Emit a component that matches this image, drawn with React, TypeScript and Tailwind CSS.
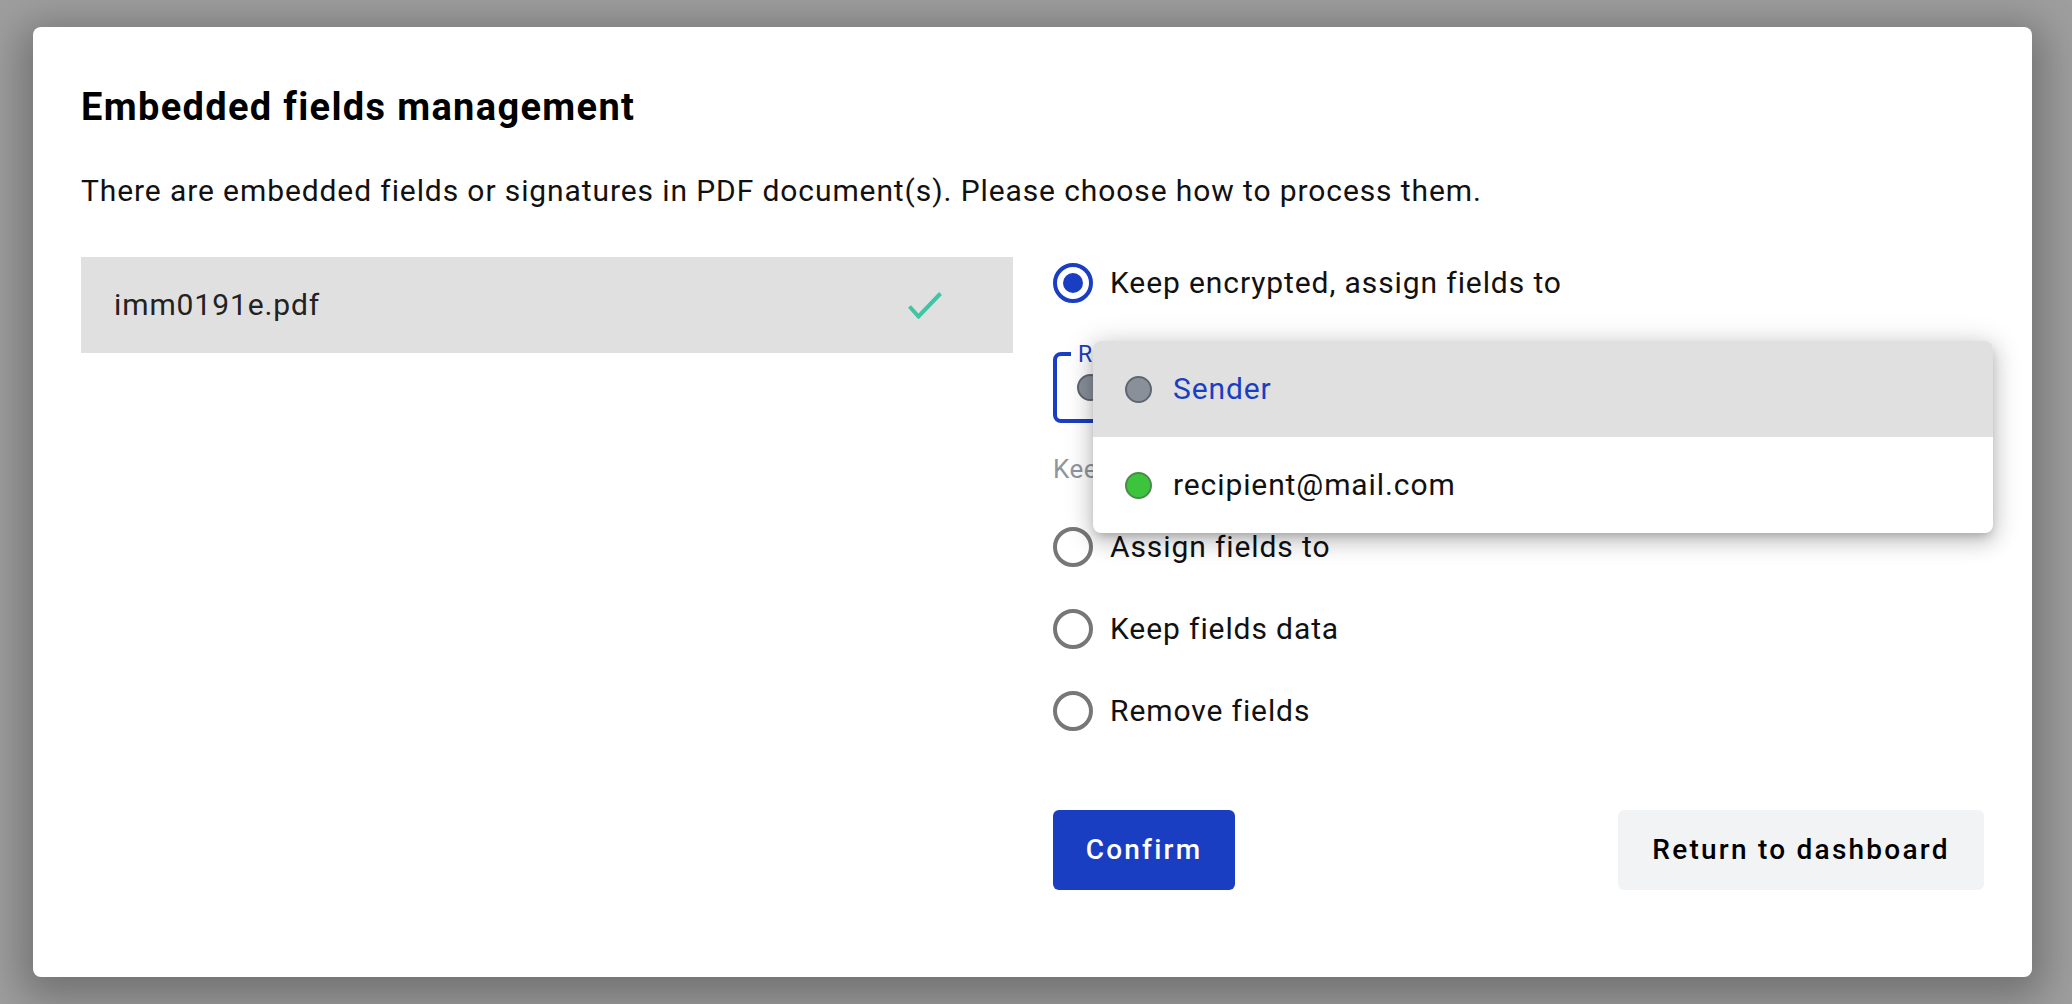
import React from "react";

function Radio({ checked, label }: { checked?: boolean; label: string }) {
  return (
    <div className="flex items-center h-[52px]">
      {checked ? (
        <span className="w-[40px] h-[40px] rounded-full border-[4px] border-[#1a3ec1] flex items-center justify-center shrink-0">
          <span className="w-[20px] h-[20px] rounded-full bg-[#1a3ec1]" />
        </span>
      ) : (
        <span className="w-[40px] h-[40px] rounded-full border-[4px] border-[#777777] shrink-0" />
      )}
      <span className="ml-[17px] text-[30px] leading-[36px] tracking-[0.03em] text-[#111111]">{label}</span>
    </div>
  );
}

function Dot({ color, border }: { color: string; border: string }) {
  return (
    <span
      className="w-[27px] h-[27px] rounded-full border-[2px] shrink-0"
      style={{ backgroundColor: color, borderColor: border }}
    />
  );
}

export default function App() {
  return (
    <div className="w-[2072px] h-[1004px] bg-[#9e9e9e] pt-[27px] pl-[33px] overflow-hidden font-[Roboto,sans-serif]">
      <div className="w-[1999px] h-[950px] bg-white rounded-[8px] shadow-[0_10px_40px_12px_rgba(0,0,0,0.28)] px-[48px] pt-[59px]">
        <h1 className="text-[38px] leading-[42px] font-bold tracking-[0.035em] text-black">Embedded fields management</h1>
        <p className="mt-[45px] text-[30px] leading-[36px] tracking-[0.03em] text-[#111111]">
          There are embedded fields or signatures in PDF document(s). Please choose how to process them.
        </p>
        <div className="mt-[48px] flex gap-[40px]">
          <div className="w-[932px] shrink-0">
            <div className="h-[96px] bg-[#e0e0e0] flex items-center justify-between pl-[33px] pr-[71px]">
              <span className="text-[30px] leading-[36px] tracking-[0.03em] text-[#222222]">imm0191e.pdf</span>
              <svg width="34" height="27" viewBox="0 0 34 27" fill="none">
                <polyline points="1.5,14.5 10.5,24.5 32.5,1.5" stroke="#3ec5a5" strokeWidth="4" fill="none" />
              </svg>
            </div>
          </div>
          <div className="flex-1 flex flex-col">
            <Radio checked label="Keep encrypted, assign fields to" />
            <div className="relative mt-[43px] h-[71px] border-[4px] border-[#1a3ec1] rounded-[8px] flex items-center pl-[20px]">
              <span className="absolute left-[14px] top-[-14px] px-[7px] bg-white text-[23px] leading-[26px] text-[#1a3ec1]">
                Recipient
              </span>
              <Dot color="#8a9099" border="#5f6670" />
              <span className="ml-[21px] text-[30px] leading-[36px] tracking-[0.03em] text-[#111111]">Sender</span>
              <div className="absolute left-[36px] top-[-15px] w-[900px] bg-white rounded-[8px] overflow-hidden shadow-[0_5px_10px_-3px_rgba(0,0,0,0.2),0_8px_20px_2px_rgba(0,0,0,0.14),0_3px_28px_4px_rgba(0,0,0,0.12)] z-10">
                <div className="h-[96px] bg-[#e0e0e0] flex items-center pl-[32px]">
                  <Dot color="#8a9099" border="#5f6670" />
                  <span className="ml-[21px] text-[30px] leading-[36px] tracking-[0.03em] text-[#1a3ec1]">Sender</span>
                </div>
                <div className="h-[96px] flex items-center pl-[32px]">
                  <Dot color="#3cc43c" border="#4b8a4b" />
                  <span className="ml-[21px] text-[30px] leading-[36px] tracking-[0.03em] text-[#111111]">recipient@mail.com</span>
                </div>
              </div>
            </div>
            <p className="mt-[28px] text-[26px] leading-[36px] tracking-[0.02em] text-[#8f969e]">Keep encrypted fields for the selected recipient</p>
            <div className="mt-[34px]">
              <Radio label="Assign fields to" />
            </div>
            <div className="mt-[30px]">
              <Radio label="Keep fields data" />
            </div>
            <div className="mt-[30px]">
              <Radio label="Remove fields" />
            </div>
            <div className="mt-[73px] flex justify-between">
              <button className="w-[182px] h-[80px] rounded-[6px] bg-[#1a3ec1] text-white text-[28px] font-medium tracking-[0.08em]">
                Confirm
              </button>
              <button className="w-[366px] h-[80px] rounded-[6px] bg-[#f2f3f5] text-black text-[28px] font-medium tracking-[0.08em]">
                Return to dashboard
              </button>
            </div>
          </div>
        </div>
      </div>
    </div>
  );
}
